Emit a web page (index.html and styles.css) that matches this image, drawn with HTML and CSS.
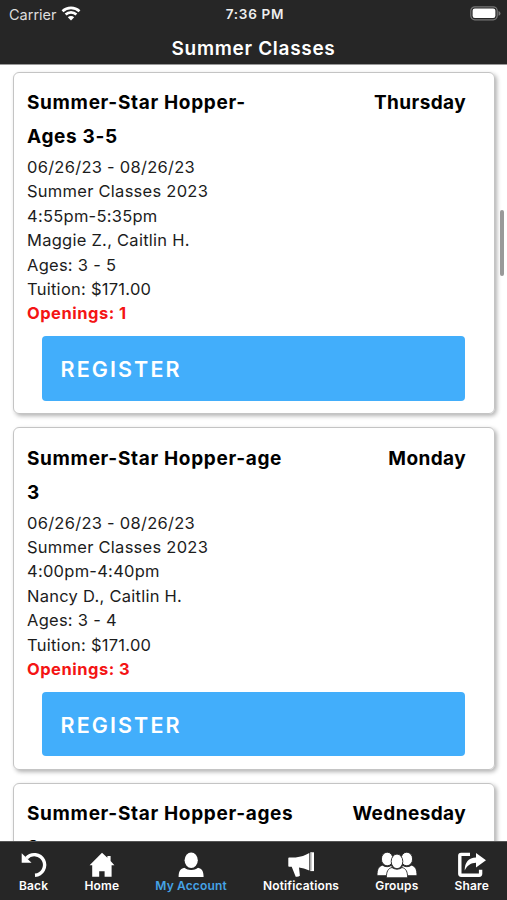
FILE: index.html
```html
<!DOCTYPE html>
<html lang="en">
<head>
    <meta charset="UTF-8">
    <meta name="viewport" content="width=device-width, initial-scale=1.0">
    <title>Summer Classes</title>
    <link rel="stylesheet" href="styles.css">
</head>
<body>
    <header class="header">
        <div class="status-bar">
            <div class="carrier">
                <span>Carrier</span>
                <svg class="wifi" width="20" height="15" viewBox="0 0 20 15">
                    <path d="M1.500 5.200a12.400 12.400 0 0 1 17 0M4.600 8.500a7.800 7.800 0 0 1 10.800 0" fill="none" stroke="#fff" stroke-width="2.600"/>
                    <path d="M10 14.600l-3.200-3.400a4.600 4.600 0 0 1 6.400 0z" fill="#fff"/>
                </svg>
            </div>
            <div class="time">7:36 PM</div>
            <div class="battery">
                <svg width="31" height="15" viewBox="0 0 31 15">
                    <rect x=".8" y=".8" width="26.400" height="13" rx="4" fill="none" stroke="#777" stroke-width="1.200"/>
                    <rect x="2.600" y="2.600" width="22.800" height="9.400" rx="2.200" fill="#fff"/>
                    <path d="M28.500 5v4.800q2-.6 2-2.400t-2-2.400z" fill="#777"/>
                </svg>
            </div>
        </div>
        <h1>Summer Classes</h1>
    </header>

    <main class="class-list">
        <div class="card">
            <div class="card-title">
                <h2>Summer-Star Hopper-<br>Ages 3-5</h2>
                <span class="day">Thursday</span>
            </div>
            <div class="details">
                <div>06/26/23 - 08/26/23</div>
                <div>Summer Classes 2023</div>
                <div>4:55pm-5:35pm</div>
                <div>Maggie Z., Caitlin H.</div>
                <div>Ages: 3 - 5</div>
                <div>Tuition: $171.00</div>
                <div class="openings">Openings: 1</div>
            </div>
            <button class="register">REGISTER</button>
        </div>

        <div class="card">
            <div class="card-title">
                <h2>Summer-Star Hopper-age<br>3</h2>
                <span class="day">Monday</span>
            </div>
            <div class="details">
                <div>06/26/23 - 08/26/23</div>
                <div>Summer Classes 2023</div>
                <div>4:00pm-4:40pm</div>
                <div>Nancy D., Caitlin H.</div>
                <div>Ages: 3 - 4</div>
                <div>Tuition: $171.00</div>
                <div class="openings">Openings: 3</div>
            </div>
            <button class="register">REGISTER</button>
        </div>

        <div class="card">
            <div class="card-title">
                <h2>Summer-Star Hopper-ages<br>3</h2>
                <span class="day">Wednesday</span>
            </div>
        </div>
        <div class="scrollbar"></div>
    </main>

    <nav class="tabs">
        <a class="tab">
            <svg width="28" height="26" viewBox="0 0 28 26">
                <path d="M6.500 6.200A10.300 10.300 0 1 1 15 23.200" fill="none" stroke="#fff" stroke-width="3.400"/>
                <path d="M1.700 1.200v9.600h9.800z" fill="#fff"/>
            </svg>
            <span>Back</span>
        </a>
        <a class="tab">
            <svg width="26" height="26" viewBox="0 0 26 26">
                <path d="M13 .8L.6 13.200h2.600v11.600h7v-5.600h5.400v5.600h7V13.200h2.800L21.600 9V4h-3.200v1.800z" fill="#fff"/>
            </svg>
            <span>Home</span>
        </a>
        <a class="tab active">
            <svg width="26" height="26" viewBox="0 0 26 26">
                <ellipse cx="13.200" cy="8.200" rx="6.600" ry="7.800" fill="#fff"/>
                <path d="M.6 25c0-5.600 1.800-8.400 5.800-9.200 2 1.500 4.200 2.200 6.800 2.200s4.800-.7 6.800-2.200c4 .8 5.600 3.600 5.600 9.200z" fill="#fff"/>
                <path d="M6 14.600q7.200 4.800 14.400 0" fill="none" stroke="#262626" stroke-width="1"/>
            </svg>
            <span>My Account</span>
        </a>
        <a class="tab">
            <svg width="28" height="26" viewBox="0 0 28 26">
                <path d="M1.300 6.200q0-.8.8-.8h6.500Q16.500 4.600 22.300 1v17.400q-5.600-2.400-10.300-3l.9 8.400q-1.800 1.400-4.200.9L4.700 14.800H2.100q-.8 0-.8-.8z" fill="#fff"/>
                <path d="M23.300.3h3.700v18.800h-3.700z" fill="#fff"/>
                <path d="M24.100 1v17.400" stroke="#777" stroke-width=".6"/>
            </svg>
            <span>Notifications</span>
        </a>
        <a class="tab">
            <svg width="40" height="26" viewBox="0 0 40 26">
                <g fill="#fff" stroke="#262626" stroke-width=".9">
                    <ellipse cx="10.200" cy="7" rx="5.800" ry="6.800"/>
                    <ellipse cx="29.800" cy="7" rx="5.800" ry="6.800"/>
                    <path d="M0 23.700c0-6.200 1.400-9.500 5.600-10.500 2.800 2 6.200 2 9 0l3 10.500z"/>
                    <path d="M40 23.700c0-6.200-1.400-9.500-5.600-10.500-2.800 2-6.200 2-9 0l-3 10.500z"/>
                    <path d="M9.400 25.800c0-6 1.400-9.300 5.600-10.300 3 2.200 7 2.200 10 0 4.200 1 5.600 4.300 5.600 10.300z"/>
                    <ellipse cx="20" cy="9.400" rx="5.800" ry="7.300"/>
                </g>
            </svg>
            <span>Groups</span>
        </a>
        <a class="tab">
            <svg width="30" height="26" viewBox="0 0 30 26">
                <path d="M13 2.400H4.200q-1.400 0-1.400 1.400v18q0 1.400 1.400 1.400h18q1.400 0 1.400-1.400v-4" fill="none" stroke="#fff" stroke-width="3.400"/>
                <path d="M7.700 18.600C7.700 10.400 11.500 5.700 19 5.500V.9l10 7.300-10 7.400v-4.900c-4.800.2-8.800 2.200-11.300 7.900z" fill="#fff"/>
            </svg>
            <span>Share</span>
        </a>
    </nav>
</body>
</html>
```
FILE: styles.css
```css
* {
    box-sizing: border-box;
}
body {
    font-family: Inter, "Liberation Sans", sans-serif;
    background-color: #fff;
    margin: 0;
    height: 100vh;
    display: flex;
    flex-direction: column;
    overflow: hidden;
}
.header {
    background-color: #262626;
    color: #fff;
    height: 65px;
    flex: none;
    border-bottom: 1px solid #999;
}
.status-bar {
    display: grid;
    grid-template-columns: 1fr auto 1fr;
    align-items: center;
    height: 28px;
    padding: 0 6px 0 9px;
}
.carrier {
    display: flex;
    align-items: center;
    gap: 4px;
    font-size: 14.5px;
    color: #ddd;
}
.wifi {
    margin-bottom: 2px;
}
.time {
    font-size: 13.5px;
    font-weight: 600;
    letter-spacing: 0.7px;
    color: #eee;
}
.battery {
    display: flex;
    justify-content: flex-end;
    margin-bottom: 2px;
}
h1 {
    margin: 0;
    font-size: 19px;
    line-height: 41px;
    font-weight: 600;
    letter-spacing: 0.7px;
    text-align: center;
}
.class-list {
    flex: 1;
    min-height: 0;
    overflow: hidden;
    position: relative;
    padding: 6.5px 12.5px 0 13px;
}
.card {
    height: 342.5px;
    margin-bottom: 13px;
    padding: 13.5px 27.5px 0 13px;
    border: 1px solid #c4c4c4;
    border-radius: 6px;
    box-shadow: 2px 2px 4px rgba(0,0,0,0.3);
}
.card-title {
    display: flex;
    justify-content: space-between;
    font-size: 19px;
    line-height: 34px;
    font-weight: 700;
}
h2 {
    margin: 0;
    font-size: inherit;
    font-weight: inherit;
    letter-spacing: 0.67px;
}
.day {
    letter-spacing: 0.4px;
}
.details {
    font-size: 16.5px;
    line-height: 24.4px;
    letter-spacing: 0.26px;
    color: #1c1c1c;
    margin-top: 1px;
}
.details .openings {
    color: #f41414;
    font-weight: 700;
    letter-spacing: 0.5px;
}
.register {
    display: block;
    width: 423px;
    height: 64.5px;
    margin: 10.5px 0 0 15px;
    padding: 1px 18.5px 0;
    border: none;
    border-radius: 4px;
    background-color: #42aefb;
    color: #fff;
    font-family: inherit;
    font-size: 21.5px;
    font-weight: 600;
    letter-spacing: 2.1px;
    text-align: left;
    cursor: pointer;
}
/* scroll indicator lies over the list */
.scrollbar {
    position: absolute;
    top: 145px;
    right: 3.5px;
    width: 4px;
    height: 66px;
    border-radius: 2px;
    background-color: #999;
}
.tabs {
    display: flex;
    justify-content: space-between;
    flex: none;
    height: 59px;
    padding: 9.5px 18px 0 19px;
    background-color: #262626;
    border-top: 1px solid #555;
}
.tab {
    display: flex;
    flex-direction: column;
    align-items: center;
    color: #fff;
    font-size: 12px;
    line-height: 16px;
    font-weight: 600;
    letter-spacing: 0.14px;
    cursor: pointer;
}
.tab svg {
    flex: none;
    margin: 0 -4px;
}
.tab.active span {
    color: #45a3e6;
}
```
